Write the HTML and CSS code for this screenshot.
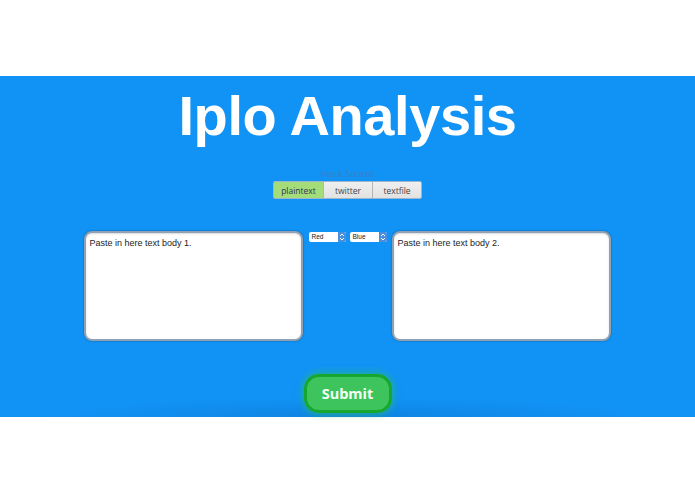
FILE: index.html
```html
<!DOCTYPE html>
<html>
<head>
<meta charset="utf-8">
<link rel="stylesheet" href="styles.css">
</head>
<body>
<div class="top"></div>
<section class="hero">
  <h1 class="title">Iplo Analysis</h1>
  <div class="source-label">Input Source</div>
  <div class="tabs">
    <button class="tab active">plaintext</button>
    <button class="tab">twitter</button>
    <button class="tab">textfile</button>
  </div>
  <div class="row">
    <div class="box">Paste in here text body 1.</div>
    <div class="selects">
      <div class="sel">Red<span class="arr"><svg width="6" height="8" viewBox="0 0 6 8"><path d="M1 3 L3 1 L5 3 M1 5 L3 7 L5 5" fill="none" stroke="#fff" stroke-width="1"/></svg></span></div>
      <div class="sel">Blue<span class="arr"><svg width="6" height="8" viewBox="0 0 6 8"><path d="M1 3 L3 1 L5 3 M1 5 L3 7 L5 5" fill="none" stroke="#fff" stroke-width="1"/></svg></span></div>
    </div>
    <div class="box">Paste in here text body 2.</div>
  </div>
  <div class="submit-wrap">
    <button class="submit">Submit</button>
  </div>
</section>
</body>
</html>
```
FILE: styles.css
```css
html, body { margin: 0; padding: 0; background: #fff; }
body { width: 695px; height: 494px; overflow: hidden; font-family: "Liberation Sans", Arial, sans-serif; }
.top { height: 76px; }
.hero {
  height: 341px;
  background: #1193f5;
  background-image: radial-gradient(ellipse 300px 20px at 50% 100%, rgba(0,60,140,0.18), rgba(0,60,140,0));
  display: flex;
  flex-direction: column;
  align-items: center;
  padding-top: 12px;
  box-sizing: border-box;
}
.title {
  margin: 0;
  font-size: 56px;
  line-height: 56px;
  font-weight: bold;
  color: #fff;
  letter-spacing: -0.4px;
}
.source-label {
  margin-top: 25px;
  font-family: "Open Sans", sans-serif;
  font-size: 9px;
  line-height: 10px;
  color: #3b7fc4;
}
.tabs {
  margin-top: 2px;
  display: flex;
  border: 1px solid #9db6cc;
  border-radius: 2px;
  overflow: hidden;
}
.tab {
  width: 49px;
  height: 16px;
  margin: 0;
  padding: 0;
  border: none;
  border-left: 1px solid #b5b5b5;
  background: linear-gradient(#efefef, #e2e2e2);
  font-family: "Open Sans", sans-serif;
  font-size: 8.5px;
  color: #444;
}
.tab:first-child { border-left: none; }
.tab.active { background: #a3dc79; color: #335; }
.row {
  margin-top: 32px;
  display: flex;
  align-items: flex-start;
  width: 528px;
}
.box {
  width: 219px;
  height: 110px;
  box-sizing: border-box;
  background: #fff;
  border: 2px solid #8fa1b3;
  border-radius: 8px;
  box-shadow: 0 0 2px rgba(0,0,0,0.4), inset 0 1px 2px rgba(0,0,0,0.15);
  padding: 4px 4px;
  font-size: 9px;
  line-height: 12px;
  color: #222;
}
.selects {
  display: flex;
  gap: 4px;
  padding: 1px 5px 0 6px;
  width: 89px;
  box-sizing: border-box;
}
.sel {
  width: 37px;
  height: 10px;
  box-sizing: border-box;
  background: #fff;
  border-radius: 2px;
  font-size: 6.5px;
  line-height: 10px;
  color: #222;
  padding-left: 3px;
  position: relative;
}
.sel .arr {
  position: absolute;
  right: 0;
  top: 0;
  width: 8px;
  height: 10px;
  background: #4a8ee0;
  border-radius: 0 2px 2px 0;
  display: flex;
  align-items: center;
  justify-content: center;
}
.submit-wrap { margin-top: 33px; }
.submit {
  width: 88px;
  height: 39px;
  border: 3px solid #18a72e;
  border-radius: 15px;
  background: #3ec45c;
  color: #f4fff4;
  font-family: "Open Sans", sans-serif;
  font-weight: bold;
  font-size: 14.5px;
  box-shadow: 0 0 6px 2px rgba(40,200,80,0.5);
  padding: 0;
}
```
